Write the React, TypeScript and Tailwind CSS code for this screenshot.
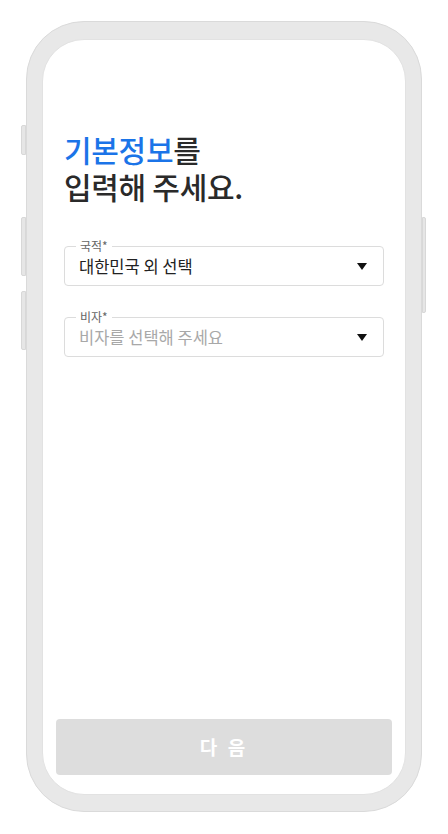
import React from 'react';

const FONT = { fontFamily: '"Noto Sans CJK KR", "Noto Sans", sans-serif' };

function Caret() {
  return (
    <svg width="10" height="7" viewBox="0 0 10 7" className="shrink-0">
      <path d="M0 0h10L5 7z" fill="#111" />
    </svg>
  );
}

function SelectField({ label, value, placeholder }: { label: string; value?: string; placeholder: string }) {
  return (
    <div className="relative h-[40px] rounded-[4px] border border-[#dcdcdc] flex items-center pl-[14px] pr-[16px]">
      <span className="absolute -top-[8px] left-[11px] bg-white px-[4px] text-[12px] leading-[14px] text-[#666]">
        {label}
      </span>
      <span className={`flex-1 text-[16.5px] leading-[20px] ${value ? 'text-[#222]' : 'text-[#a8a8a8]'}`}>
        {value ?? placeholder}
      </span>
      <Caret />
    </div>
  );
}

export default function App() {
  return (
    <div className="min-h-[834px] bg-white pt-[21px] pl-[26px]" style={FONT}>
      <div className="relative w-[396px] h-[791px]">
        {/* side buttons */}
        <div className="absolute -left-[5px] top-[104px] w-[5px] h-[30px] rounded-l-[2px] bg-[#e6e6e6] border border-[#d8d8d8]" />
        <div className="absolute -left-[5px] top-[196px] w-[5px] h-[59px] rounded-l-[2px] bg-[#e6e6e6] border border-[#d8d8d8]" />
        <div className="absolute -left-[5px] top-[270px] w-[5px] h-[59px] rounded-l-[2px] bg-[#e6e6e6] border border-[#d8d8d8]" />
        <div className="absolute -right-[4px] top-[196px] w-[4px] h-[96px] rounded-r-[2px] bg-[#e6e6e6] border border-[#d8d8d8]" />

        <div className="h-full rounded-[58px] bg-[#e8e8e8] border border-[#dadada] pt-[17px] pb-[16px] px-[15px]">
          <div className="h-full rounded-[42px] bg-white border border-[#e2e2e2] flex flex-col">
            <div className="pt-[91px] px-[21px]">
              <h1 className="text-[30px] leading-[37px] font-medium text-[#2a2a2a] tracking-[-0.3px]">
                <span className="text-[#1b74e8]">기본정보</span>를
                <br />
                입력해 주세요.
              </h1>

              <div className="mt-[41px] flex flex-col gap-[31px]">
                <SelectField label="국적*" value="대한민국 외 선택" placeholder="국적을 선택해 주세요" />
                <SelectField label="비자*" placeholder="비자를 선택해 주세요" />
              </div>
            </div>

            <div className="mt-auto px-[13px] pb-[19px]">
              <button className="w-full h-[56px] rounded-[4px] bg-[#dddddd] text-white text-[19px] font-bold tracking-[3px]">
                다 음
              </button>
            </div>
          </div>
        </div>
      </div>
    </div>
  );
}
